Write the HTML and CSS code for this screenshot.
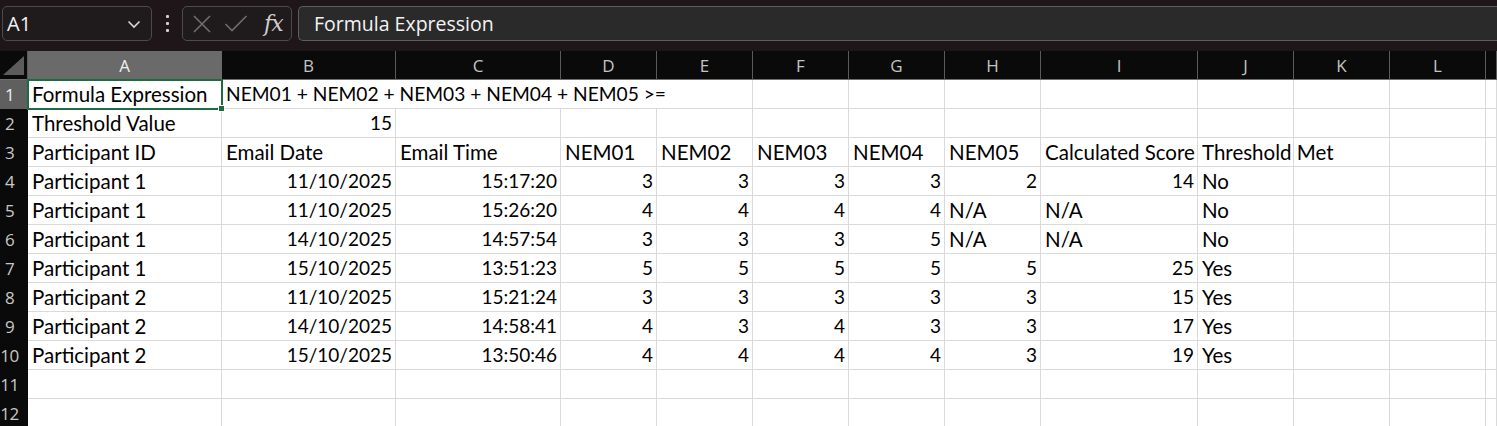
FILE: index.html
```html
<!DOCTYPE html>
<html>
<head>
<meta charset="utf-8">
<link rel="stylesheet" href="styles.css">
</head>
<body>
<div class="app">
  <div class="topbar">
    <div class="namebox">
      <span class="nb-text">A1</span>
      <svg class="chev" width="14" height="9" viewBox="0 0 14 9"><path d="M1.5 1.5 L7 7 L12.5 1.5" fill="none" stroke="#d8d8d8" stroke-width="1.6"/></svg>
    </div>
    <div class="dots"><i></i><i></i><i></i></div>
    <div class="fxbox">
      <svg width="20" height="18" viewBox="0 0 20 18"><path d="M2 1 L18 17 M18 1 L2 17" stroke="#6e6e6e" stroke-width="1.6" fill="none"/></svg>
      <svg width="24" height="18" viewBox="0 0 24 18"><path d="M1.5 9 L8 15.5 L22.5 1" stroke="#6e6e6e" stroke-width="1.6" fill="none"/></svg>
      <span class="fx">fx</span>
    </div>
    <div class="formula">Formula Expression</div>
  </div>
  <div class="sheet">
    <div class="corner"><span class="tri"></span></div>
    <div class="ch sel">A</div><div class="ch">B</div><div class="ch">C</div><div class="ch">D</div><div class="ch">E</div><div class="ch">F</div><div class="ch">G</div><div class="ch">H</div><div class="ch">I</div><div class="ch">J</div><div class="ch">K</div><div class="ch">L</div><div class="ch"></div>

    <div class="rh sel">1</div>
    <div class="c active">Formula Expression<span class="handle"></span></div><div class="c span4">NEM01 + NEM02 + NEM03 + NEM04 + NEM05 &gt;=</div><div class="c"></div><div class="c"></div><div class="c"></div><div class="c"></div><div class="c"></div><div class="c"></div><div class="c"></div><div class="c"></div>

    <div class="rh">2</div>
    <div class="c">Threshold Value</div><div class="c r">15</div><div class="c"></div><div class="c"></div><div class="c"></div><div class="c"></div><div class="c"></div><div class="c"></div><div class="c"></div><div class="c"></div><div class="c"></div><div class="c"></div><div class="c"></div>

    <div class="rh">3</div>
    <div class="c">Participant ID</div><div class="c">Email Date</div><div class="c">Email Time</div><div class="c">NEM01</div><div class="c">NEM02</div><div class="c">NEM03</div><div class="c">NEM04</div><div class="c">NEM05</div><div class="c">Calculated Score</div><div class="c">Threshold Met</div><div class="c"></div><div class="c"></div><div class="c"></div>

    <div class="rh">4</div>
    <div class="c">Participant 1</div><div class="c r">11/10/2025</div><div class="c r">15:17:20</div><div class="c r">3</div><div class="c r">3</div><div class="c r">3</div><div class="c r">3</div><div class="c r">2</div><div class="c r">14</div><div class="c">No</div><div class="c"></div><div class="c"></div><div class="c"></div>

    <div class="rh">5</div>
    <div class="c">Participant 1</div><div class="c r">11/10/2025</div><div class="c r">15:26:20</div><div class="c r">4</div><div class="c r">4</div><div class="c r">4</div><div class="c r">4</div><div class="c">N/A</div><div class="c">N/A</div><div class="c">No</div><div class="c"></div><div class="c"></div><div class="c"></div>

    <div class="rh">6</div>
    <div class="c">Participant 1</div><div class="c r">14/10/2025</div><div class="c r">14:57:54</div><div class="c r">3</div><div class="c r">3</div><div class="c r">3</div><div class="c r">5</div><div class="c">N/A</div><div class="c">N/A</div><div class="c">No</div><div class="c"></div><div class="c"></div><div class="c"></div>

    <div class="rh">7</div>
    <div class="c">Participant 1</div><div class="c r">15/10/2025</div><div class="c r">13:51:23</div><div class="c r">5</div><div class="c r">5</div><div class="c r">5</div><div class="c r">5</div><div class="c r">5</div><div class="c r">25</div><div class="c">Yes</div><div class="c"></div><div class="c"></div><div class="c"></div>

    <div class="rh">8</div>
    <div class="c">Participant 2</div><div class="c r">11/10/2025</div><div class="c r">15:21:24</div><div class="c r">3</div><div class="c r">3</div><div class="c r">3</div><div class="c r">3</div><div class="c r">3</div><div class="c r">15</div><div class="c">Yes</div><div class="c"></div><div class="c"></div><div class="c"></div>

    <div class="rh">9</div>
    <div class="c">Participant 2</div><div class="c r">14/10/2025</div><div class="c r">14:58:41</div><div class="c r">4</div><div class="c r">3</div><div class="c r">4</div><div class="c r">3</div><div class="c r">3</div><div class="c r">17</div><div class="c">Yes</div><div class="c"></div><div class="c"></div><div class="c"></div>

    <div class="rh">10</div>
    <div class="c">Participant 2</div><div class="c r">15/10/2025</div><div class="c r">13:50:46</div><div class="c r">4</div><div class="c r">4</div><div class="c r">4</div><div class="c r">4</div><div class="c r">3</div><div class="c r">19</div><div class="c">Yes</div><div class="c"></div><div class="c"></div><div class="c"></div>

    <div class="rh">11</div>
    <div class="c"></div><div class="c"></div><div class="c"></div><div class="c"></div><div class="c"></div><div class="c"></div><div class="c"></div><div class="c"></div><div class="c"></div><div class="c"></div><div class="c"></div><div class="c"></div><div class="c"></div>

    <div class="rh">12</div>
    <div class="c"></div><div class="c"></div><div class="c"></div><div class="c"></div><div class="c"></div><div class="c"></div><div class="c"></div><div class="c"></div><div class="c"></div><div class="c"></div><div class="c"></div><div class="c"></div><div class="c"></div>
  </div>
</div>
</body>
</html>
```
FILE: styles.css
```css
* { box-sizing: border-box; }
html, body { margin: 0; padding: 0; background: #ffffff; overflow: hidden; }
.app { width: 1497px; height: 426px; overflow: hidden; }

.topbar {
  height: 51px;
  background: #1e1618;
  display: flex;
  align-items: flex-start;
  padding: 6px 0 0 2px;
  font-family: "Open Sans", "Noto Sans", sans-serif;
}
.namebox {
  width: 150px; height: 35px;
  border: 1px solid #4e4a4c;
  border-radius: 5px;
  background: #1f1a1c;
  display: flex; align-items: center; justify-content: space-between;
  padding: 0 10px 0 4px;
  color: #f2f2f2;
  font-size: 20px;
}
.chev { margin-top: 1px; }
.dots {
  width: 30px; height: 35px;
  display: flex; flex-direction: column; align-items: center; justify-content: center; gap: 4px;
}
.dots i { width: 3px; height: 3px; background: #d0d0d0; border-radius: 1px; display: block; }
.fxbox {
  width: 110px; height: 35px;
  border: 1px solid #4e4a4c;
  border-radius: 5px;
  background: #1f1a1c;
  display: flex; align-items: center;
  padding: 0 0 0 9px;
  gap: 12px;
}
.fx {
  font-family: "DejaVu Serif", "Liberation Serif", serif;
  font-style: italic;
  font-size: 22px;
  color: #cfcfcf;
  margin-left: 4px;
  letter-spacing: -1px;
}
.formula {
  margin-left: 6px;
  flex: 1;
  height: 35px;
  border: 1px solid #5f5c5d;
  border-right: none;
  border-radius: 5px 0 0 5px;
  background: #2a2a2a;
  color: #f4f4f4;
  font-size: 19.5px;
  display: flex; align-items: center;
  padding-left: 15px;
}

.sheet {
  display: grid;
  grid-template-columns: 28px 194px 174px 165px 96px 96px 96px 96px 96px 157px 96px 96px 96px 1fr;
  grid-auto-rows: 29px;
}
.corner {
  background: #0a0a0a;
  border-bottom: 1px solid #6e6e6e;
  border-right: 1px solid #5a5a5a;
  position: relative;
}
.tri {
  position: absolute; left: 3px; bottom: 4px;
  width: 0; height: 0;
  border-style: solid;
  border-width: 0 0 19px 21px;
  border-color: transparent transparent #5c5c5c transparent;
}
.ch {
  background: #0a0a0a;
  color: #c4c4c4;
  border-right: 1px solid #5a5a5a;
  border-bottom: 1px solid #6e6e6e;
  font-family: "Open Sans", "Noto Sans", sans-serif;
  font-size: 17px;
  display: flex; align-items: center; justify-content: center;
  padding-top: 1px;
}
.ch.sel { background: #6a6a6a; color: #f0f0f0; border-right-color: #6a6a6a; }
.rh {
  background: #0a0a0a;
  color: #c8c8c8;
  font-family: "Open Sans", "Noto Sans", sans-serif;
  font-size: 17px;
  display: flex; align-items: center; justify-content: center;
  padding-right: 9px;
  letter-spacing: -0.5px;
}
.rh.sel { background: #5f5f5f; color: #f0f0f0; }
.c {
  border-right: 1px solid #dadada;
  border-bottom: 1px solid #dadada;
  font-family: Lato, "Liberation Sans", sans-serif;
  font-size: 20.5px;
  color: #000;
  display: flex; align-items: flex-end;
  padding: 0 3px 2px 4px;
  white-space: nowrap;
  line-height: 24px;
}
.c.r { justify-content: flex-end; font-size: 19px; }
.c.span4 { grid-column: span 4; font-size: 19.2px; }
.c.active {
  position: relative;
  outline: 2px solid #1d6b41;
  outline-offset: -1px;
  z-index: 1;
}
.handle {
  position: absolute; right: -4px; bottom: -4px;
  width: 7px; height: 7px;
  background: #1d6b41;
  border: 1px solid #ffffff;
}
```
